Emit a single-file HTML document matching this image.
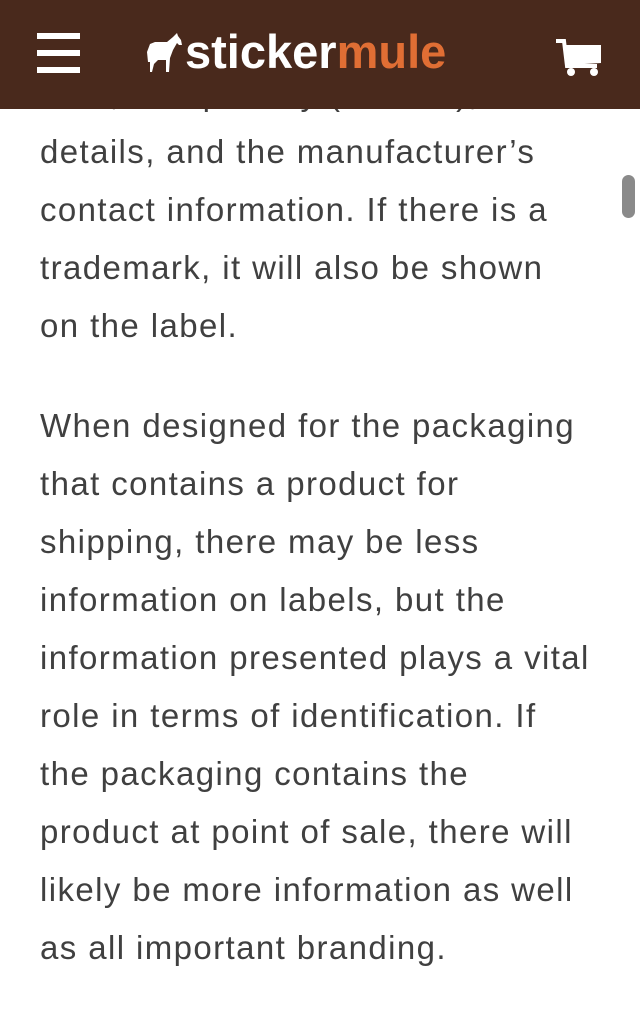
<!DOCTYPE html>
<html><head><meta charset="utf-8"><style>
html,body{margin:0;padding:0;width:640px;height:959px;overflow:hidden;background:#fff}
body{font-family:"Liberation Sans",Helvetica,Arial,sans-serif;color:#404040}
.hdr{position:absolute;left:0;top:0;width:640px;height:109px;background:#49291c;z-index:2}
.txt{position:absolute;left:40px;top:65px;width:590px;font-size:33px;letter-spacing:1.4px;line-height:58px;white-space:nowrap;overflow:hidden}
p{margin:0 0 42px 0}
.sb{position:absolute;left:622px;top:175px;width:13px;height:43px;border-radius:7px;background:#8a8a8a}
.logo{position:absolute;left:185px;top:24px;font-size:47px;font-weight:bold;color:#fff;letter-spacing:0px}
.logo span{color:#e06e34}
</style></head><body>
<div class="hdr">
 <div style="position:absolute;left:37px;top:33px;width:43px;height:6px;background:#fff"></div>
 <div style="position:absolute;left:37px;top:50px;width:43px;height:6px;background:#fff"></div>
 <div style="position:absolute;left:37px;top:67px;width:43px;height:6px;background:#fff"></div>
 <svg style="position:absolute;left:147px;top:32px" width="36" height="40" viewBox="0 0 36 40"><path d="M30 1 L31 4 L34 8 L35 13 L32 13 L30 11 L26 18 L23 26 L22 40 L19 40 L19 28 L11 28 L7 32 L5 40 L3 40 L3 30 L1 30 L0 20 L3 12 L8 10 L20 10 L26 5 L28 3 Z" fill="#fff"/></svg>
 <div class="logo">sticker<span>mule</span></div>
 <svg style="position:absolute;left:555px;top:38px" width="48" height="40" viewBox="0 0 48 40"><path d="M1 3 H9 L12 28 H42" stroke="#fff" stroke-width="4" fill="none"/><path d="M10 7 H46 V25 L13 27 Z" fill="#fff"/><circle cx="16" cy="34" r="4" fill="#fff"/><circle cx="39" cy="34" r="4" fill="#fff"/></svg>
</div>
<div class="txt">
<p>date, net quantity (ounces),<br>details, and the manufacturer’s<br>contact information. If there is a<br>trademark, it will also be shown<br>on the label.</p>
<p>When designed for the packaging<br>that contains a product for<br>shipping, there may be less<br>information on labels, but the<br>information presented plays a vital<br>role in terms of identification. If<br>the packaging contains the<br>product at point of sale, there will<br>likely be more information as well<br>as all important branding.</p>
</div>
<div class="sb"></div>
</body></html>
